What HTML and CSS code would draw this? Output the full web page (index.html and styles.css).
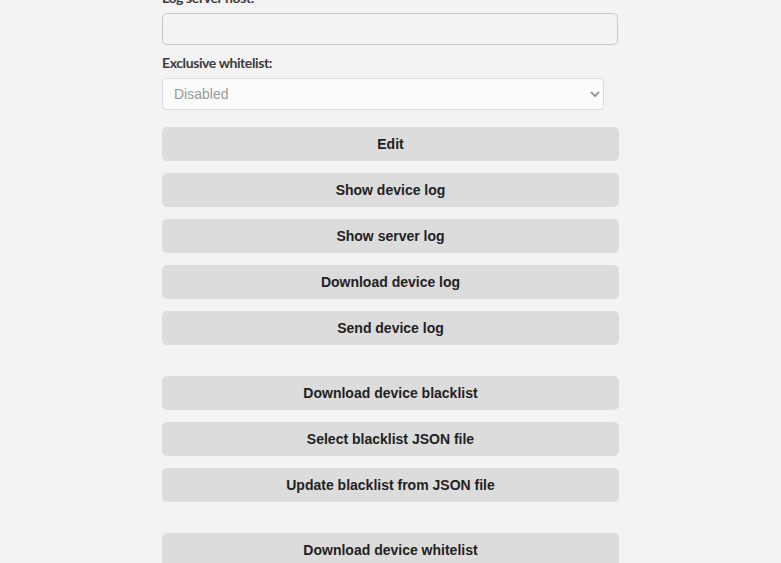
FILE: index.html
```html
<!DOCTYPE html>
<html lang="en">
<head>
  <meta charset="UTF-8" />
  <meta name="viewport" content="width=device-width, initial-scale=1.0"/>
  <title>Device Settings</title>
  <link rel="stylesheet" href="styles.css">
</head>
<body>

<section class="panel">
  <div class="field">
    <label for="logHost">Log server host:</label>
    <input type="text" id="logHost" class="text-input" />
  </div>

  <div class="field">
    <label for="whitelist">Exclusive whitelist:</label>
    <select id="whitelist" class="select-input">
      <option>Disabled</option>
      <option>Enabled</option>
    </select>
  </div>

  <div class="group">
    <button class="btn">Edit</button>
    <button class="btn">Show device log</button>
    <button class="btn">Show server log</button>
    <button class="btn">Download device log</button>
    <button class="btn">Send device log</button>
  </div>

  <div class="group">
    <button class="btn">Download device blacklist</button>
    <button class="btn">Select blacklist JSON file</button>
    <button class="btn">Update blacklist from JSON file</button>
  </div>

  <div class="group">
    <button class="btn">Download device whitelist</button>
  </div>
</section>

</body>
</html>
```

FILE: styles.css
```css
body {
  margin: 0;
  padding: 0;
  background-color: #f3f3f3;
  font-family: "Liberation Sans", Arial, sans-serif;
  color: #222;
}

.panel {
  width: 457px;
  margin: -12px auto 0;
}

.field {
  margin-bottom: 8px;
}

.field label {
  display: block;
  font-family: Lato, "Open Sans", sans-serif;
  font-weight: bold;
  font-size: 14px;
  letter-spacing: -0.4px;
  line-height: 20px;
  color: #3c3c3c;
  margin-bottom: 5px;
}

.text-input {
  box-sizing: border-box;
  display: block;
  width: 456px;
  height: 32px;
  background-color: #f3f3f3;
  border: 1px solid #c8c8c8;
  border-radius: 5px;
}

.select-input {
  box-sizing: border-box;
  display: block;
  width: 442px;
  height: 32px;
  padding: 0 7px;
  font-family: "Liberation Sans", Arial, sans-serif;
  font-size: 14px;
  color: #999;
  background-color: #fbfbfb;
  border: 1px solid #dcdcdc;
  border-radius: 4px;
}

.group {
  display: flex;
  flex-direction: column;
  gap: 12px;
  margin-top: 17px;
}

.group + .group {
  margin-top: 31px;
}

.btn {
  width: 100%;
  height: 34px;
  border: none;
  border-radius: 5px;
  background-color: #dcdcdc;
  font-family: "Liberation Sans", Arial, sans-serif;
  font-weight: bold;
  font-size: 14px;
  color: #222;
  cursor: pointer;
}
```
